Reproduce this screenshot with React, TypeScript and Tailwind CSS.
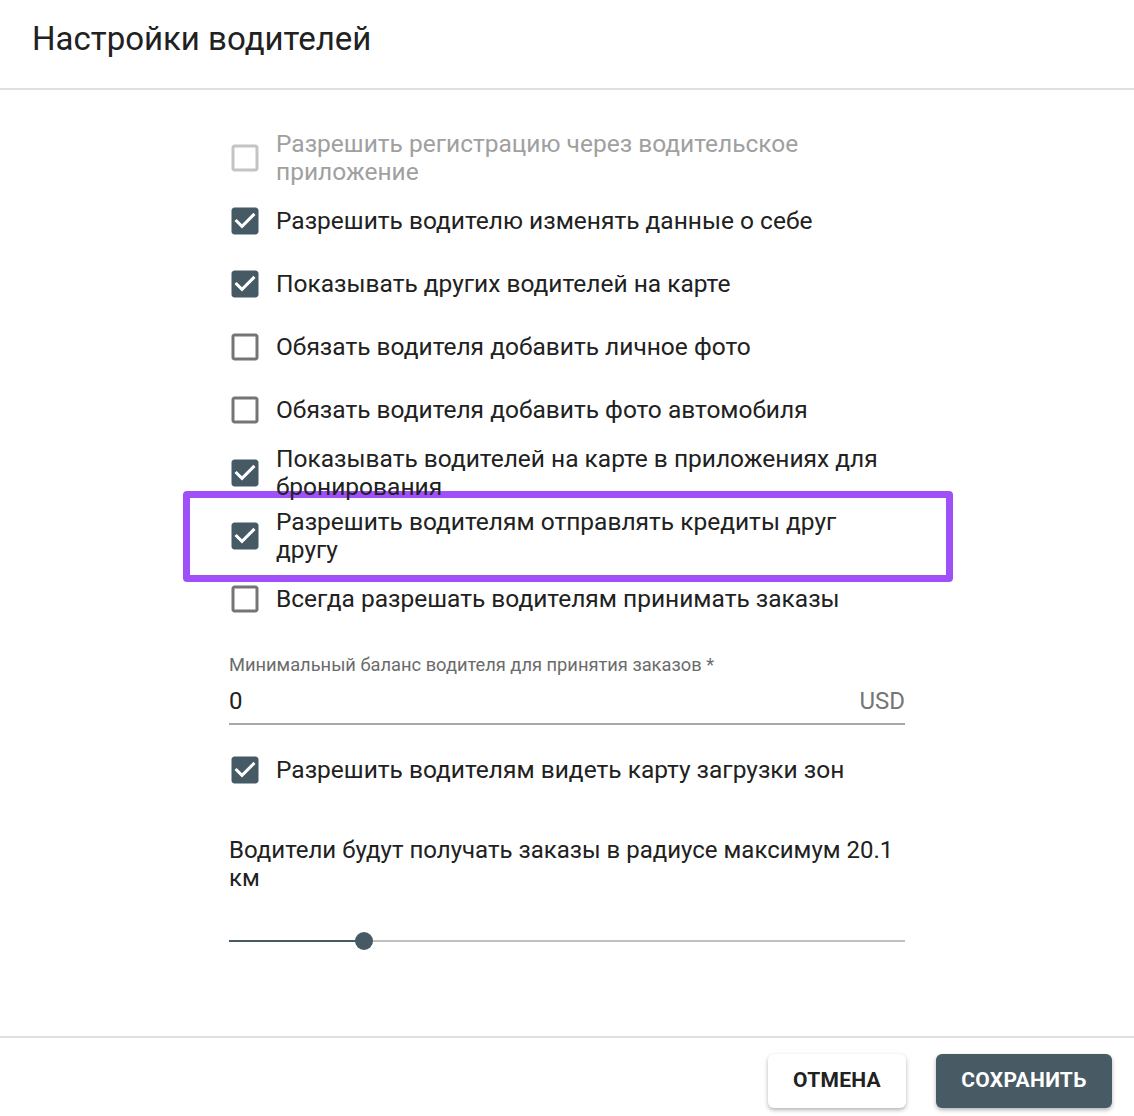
import React from "react";

const CHECKED =
  "M19 3H5c-1.11 0-2 .9-2 2v14c0 1.1.89 2 2 2h14c1.11 0 2-.9 2-2V5c0-1.1-.89-2-2-2zm-9 14l-5-5 1.41-1.41L10 14.17l7.59-7.59L19 8l-9 9z";
const UNCHECKED =
  "M19 5v14H5V5h14m0-2H5c-1.1 0-2 .9-2 2v14c0 1.1.9 2 2 2h14c1.1 0 2-.9 2-2V5c0-1.1-.9-2-2-2z";

type Item = { lines: string[]; checked: boolean; disabled?: boolean; highlight?: boolean };

const items: Item[] = [
  { lines: ["Разрешить регистрацию через водительское", "приложение"], checked: false, disabled: true },
  { lines: ["Разрешить водителю изменять данные о себе"], checked: true },
  { lines: ["Показывать других водителей на карте"], checked: true },
  { lines: ["Обязать водителя добавить личное фото"], checked: false },
  { lines: ["Обязать водителя добавить фото автомобиля"], checked: false },
  { lines: ["Показывать водителей на карте в приложениях для", "бронирования"], checked: true },
  { lines: ["Разрешить водителям отправлять кредиты друг", "другу"], checked: true, highlight: true },
  { lines: ["Всегда разрешать водителям принимать заказы"], checked: false },
];

function Box({ checked, disabled }: { checked: boolean; disabled?: boolean }) {
  const color = disabled ? "text-[#c4c4c4]" : checked ? "text-[#455a64]" : "text-[#757575]";
  return (
    <svg viewBox="0 0 24 24" className={`w-[36px] h-[36px] shrink-0 ${color}`} fill="currentColor">
      <path d={checked ? CHECKED : UNCHECKED} />
    </svg>
  );
}

function Row({ item }: { item: Item }) {
  return (
    <div className="relative h-[63px] flex items-center">
      {item.highlight && (
        <div className="absolute left-[-46px] right-[-48px] top-[-13px] bottom-[-15px] border-[7px] border-[#a050f8] rounded-[4px] bg-white" />
      )}
      <div className="relative z-10 flex items-center">
        <div className="ml-[-2px]">
          <Box checked={item.checked} disabled={item.disabled} />
        </div>
        <div
          className={`ml-[13px] text-[24.5px] leading-[28px] ${
            item.disabled ? "text-[#a0a0a0]" : "text-[#212121]"
          }`}
        >
          {item.lines.map((l) => (
            <span key={l} className="block whitespace-nowrap">
              {l}
            </span>
          ))}
        </div>
      </div>
    </div>
  );
}

export default function App() {
  return (
    <div
      className="w-[1134px] h-[1116px] bg-white flex flex-col overflow-hidden"
      style={{ fontFamily: "Roboto, 'Noto Sans', sans-serif" }}
    >
      {/* Header */}
      <div className="h-[90px] border-b-2 border-[#e0e0e0] px-[32px] pt-[19px]">
        <h1 className="text-[33px] leading-[40px] text-[#212121]">Настройки водителей</h1>
      </div>

      {/* Content */}
      <div className="w-[676px] mx-auto pt-[36px]">
        {items.map((it, i) => (
          <Row key={i} item={it} />
        ))}

        {/* Balance field */}
        <div className="mt-[25px]">
          <div className="text-[18.3px] leading-[20px] text-[#6b6b6b]">
            Минимальный баланс водителя для принятия заказов *
          </div>
          <div className="mt-[12px] pb-[8px] border-b-2 border-[#a8a8a8] flex items-center justify-between">
            <span className="text-[24px] leading-[28px] text-[#212121]">0</span>
            <span className="text-[24px] leading-[28px] text-[#757575]">USD</span>
          </div>
        </div>

        <div className="mt-[13px]">
          <Row item={{ lines: ["Разрешить водителям видеть карту загрузки зон"], checked: true }} />
        </div>

        {/* Radius slider */}
        <div className="mt-[35px] text-[24px] leading-[28px] text-[#212121]">
          <span className="block whitespace-nowrap">Водители будут получать заказы в радиусе максимум 20.1</span>
          <span className="block">км</span>
        </div>
        <div className="mt-[39px] h-[20px] relative flex items-center">
          <div className="w-[135px] h-[2px] bg-[#455a64]" />
          <div className="flex-1 h-[2px] bg-[#c0c0c0]" />
          <div className="absolute left-[126px] top-[1px] w-[18px] h-[18px] rounded-full bg-[#455a64]" />
        </div>
      </div>

      {/* Footer */}
      <div className="mt-auto border-t-2 border-[#e0e0e0] pt-[16px] pb-[8px] pr-[22px] flex justify-end gap-[30px]">
        <button className="w-[138px] h-[54px] rounded-[6px] bg-white text-[#212121] text-[21px] font-bold tracking-[0.3px] shadow-[0_2px_4px_rgba(0,0,0,0.3)]">
          ОТМЕНА
        </button>
        <button className="w-[176px] h-[54px] rounded-[6px] bg-[#485a64] text-white text-[21px] font-bold tracking-[0.3px] shadow-[0_2px_4px_rgba(0,0,0,0.3)]">
          СОХРАНИТЬ
        </button>
      </div>
    </div>
  );
}
